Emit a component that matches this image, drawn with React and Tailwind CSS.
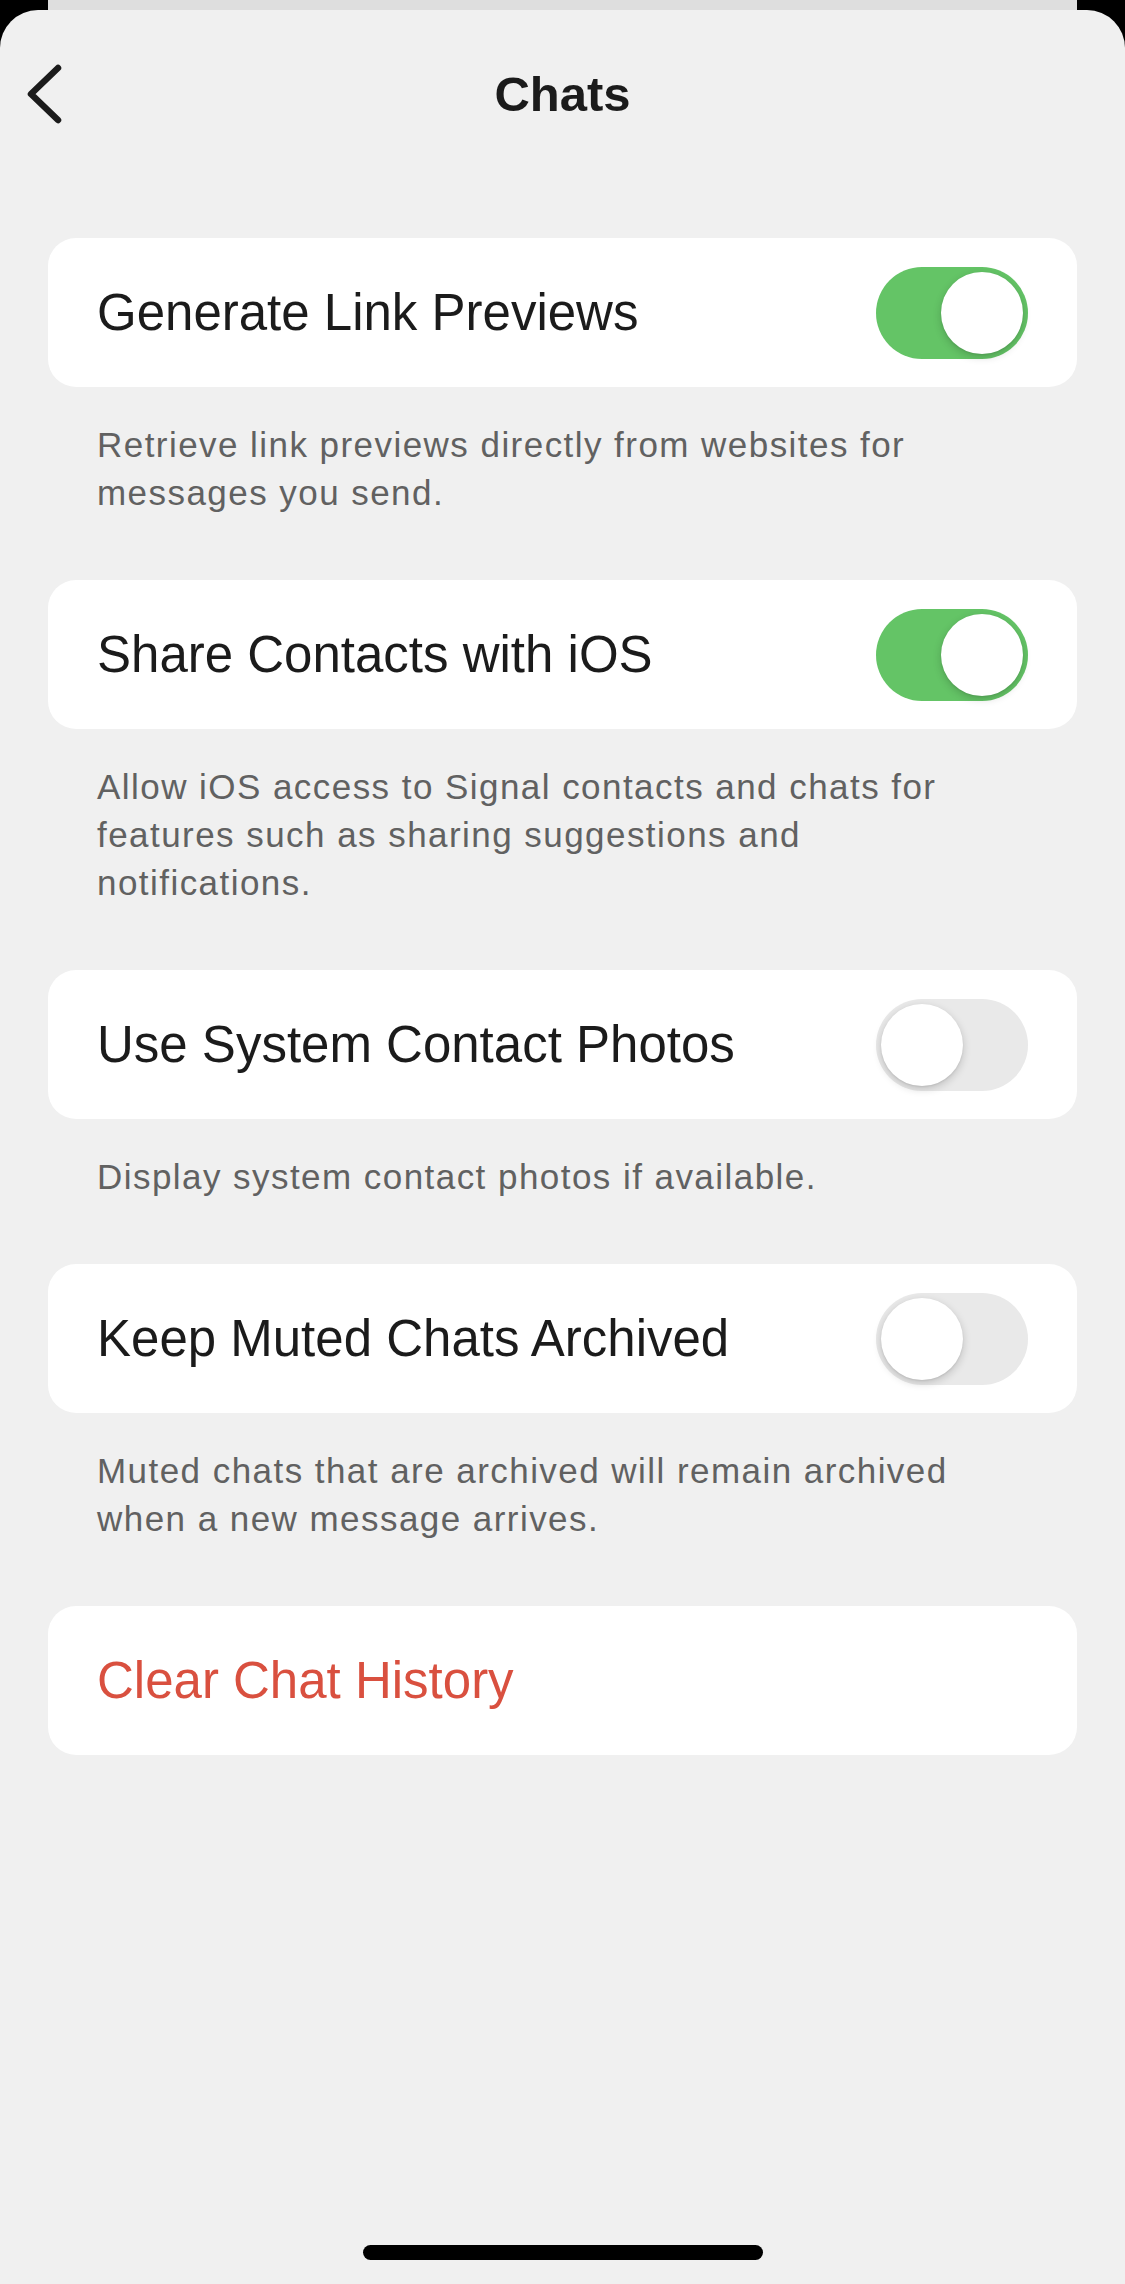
import React from "react";

function Toggle({ on }) {
  return (
    <div
      className={`relative w-[152px] h-[92px] rounded-full shrink-0 ${
        on ? "bg-[#64c466]" : "bg-[#e9e9e9]"
      }`}
    >
      <div
        className={`absolute top-[5px] w-[82px] h-[82px] rounded-full bg-white shadow-[0_3px_8px_rgba(0,0,0,0.18),0_1px_2px_rgba(0,0,0,0.08)] ${
          on ? "right-[5px]" : "left-[5px]"
        }`}
      />
    </div>
  );
}

function Card({ children }) {
  return (
    <div className="mx-[48px] h-[149px] rounded-[28px] bg-white flex items-center justify-between pl-[49px] pr-[49px]">
      {children}
    </div>
  );
}

function Desc({ lines }) {
  return (
    <div className="pt-[34px] pb-[63px] px-[97px] text-[35px] leading-[48px] tracking-[1.45px] text-[#616161]">
      {lines.map((l, i) => (
        <div key={i} className="whitespace-nowrap">
          {l}
        </div>
      ))}
    </div>
  );
}

const rows = [
  {
    label: "Generate Link Previews",
    on: true,
    desc: ["Retrieve link previews directly from websites for", "messages you send."],
  },
  {
    label: "Share Contacts with iOS",
    on: true,
    desc: [
      "Allow iOS access to Signal contacts and chats for",
      "features such as sharing suggestions and",
      "notifications.",
    ],
  },
  {
    label: "Use System Contact Photos",
    on: false,
    desc: ["Display system contact photos if available."],
  },
  {
    label: "Keep Muted Chats Archived",
    on: false,
    desc: ["Muted chats that are archived will remain archived", "when a new message arrives."],
  },
];

export default function App() {
  return (
    <div
      className="w-[1125px] h-[2284px] bg-black flex flex-col overflow-hidden"
      style={{ fontFamily: '"Liberation Sans", Arial, sans-serif' }}
    >
      <div className="mx-[48px] h-[10px] bg-[#dedede] shrink-0" />
      <div className="flex-1 bg-[#f0f0f0] rounded-t-[38px] flex flex-col">
        <div className="h-[168px] relative flex items-center justify-center shrink-0">
          <button className="absolute left-[20px] top-[50px] w-[48px] h-[68px]">
            <svg width="48" height="68" viewBox="0 0 48 68" fill="none">
              <path
                d="M38 8 L11 34 L38 60"
                stroke="#1b1b1b"
                strokeWidth="6.5"
                strokeLinecap="round"
                strokeLinejoin="round"
              />
            </svg>
          </button>
          <h1 className="text-[49px] font-bold text-[#1b1b1b] leading-none">Chats</h1>
        </div>
        <div className="pt-[60px] flex flex-col">
          {rows.map((r) => (
            <React.Fragment key={r.label}>
              <Card>
                <span className="text-[51px] text-[#1b1b1b] leading-none">{r.label}</span>
                <Toggle on={r.on} />
              </Card>
              <Desc lines={r.desc} />
            </React.Fragment>
          ))}
          <Card>
            <span className="text-[51px] text-[#d9503f] leading-none">Clear Chat History</span>
          </Card>
        </div>
        <div className="flex-1" />
        <div className="flex justify-center pb-[24px]">
          <div className="w-[400px] h-[15px] rounded-full bg-black" />
        </div>
      </div>
    </div>
  );
}
